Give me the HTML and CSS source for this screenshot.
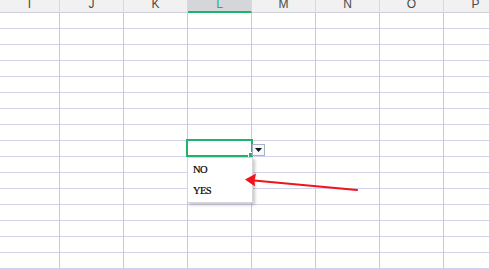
FILE: index.html
```html
<!DOCTYPE html>
<html>
<head lang="en">
<meta charset="UTF-8">
<title>数据有效性</title>
<link rel="stylesheet" href="styles.css">
</head>
<body>
<div class="sheet">
    <div class="row head">
        <div class="col">I</div>
        <div class="col">J</div>
        <div class="col">K</div>
        <div class="col on">L</div>
        <div class="col">M</div>
        <div class="col">N</div>
        <div class="col">O</div>
        <div class="col">P</div>
    </div>
    <div class="row"><div></div><div></div><div></div><div></div><div></div><div></div><div></div><div></div></div>
    <div class="row"><div></div><div></div><div></div><div></div><div></div><div></div><div></div><div></div></div>
    <div class="row"><div></div><div></div><div></div><div></div><div></div><div></div><div></div><div></div></div>
    <div class="row"><div></div><div></div><div></div><div></div><div></div><div></div><div></div><div></div></div>
    <div class="row"><div></div><div></div><div></div><div></div><div></div><div></div><div></div><div></div></div>
    <div class="row"><div></div><div></div><div></div><div></div><div></div><div></div><div></div><div></div></div>
    <div class="row"><div></div><div></div><div></div><div></div><div></div><div></div><div></div><div></div></div>
    <div class="row"><div></div><div></div><div></div><div></div><div></div><div></div><div></div><div></div></div>
    <div class="row"><div></div><div></div><div></div><div></div><div></div><div></div><div></div><div></div></div>
    <div class="row"><div></div><div></div><div></div><div></div><div></div><div></div><div></div><div></div></div>
    <div class="row"><div></div><div></div><div></div><div></div><div></div><div></div><div></div><div></div></div>
    <div class="row"><div></div><div></div><div></div><div></div><div></div><div></div><div></div><div></div></div>
    <div class="row"><div></div><div></div><div></div><div></div><div></div><div></div><div></div><div></div></div>
    <div class="row"><div></div><div></div><div></div><div></div><div></div><div></div><div></div><div></div></div>
    <div class="row"><div></div><div></div><div></div><div></div><div></div><div></div><div></div><div></div></div>
    <div class="row"><div></div><div></div><div></div><div></div><div></div><div></div><div></div><div></div></div>

    <!-- 选中单元格 + 下拉 -->
    <div class="cur"><span class="handle"></span></div>
    <div class="drop-btn">
        <svg width="7" height="4" viewBox="0 0 7 4"><polygon points="0,0 7,0 3.5,4" fill="#111"/></svg>
    </div>
    <ul class="list">
        <li>NO</li>
        <li>YES</li>
    </ul>

    <svg class="arrow" width="489" height="269" viewBox="0 0 489 269">
        <line x1="357" y1="190" x2="254" y2="180.5" stroke="#f0141c" stroke-width="2.2" stroke-linecap="round"/>
        <polygon points="245,179.5 256,173.5 254.5,180.5 255,186.5" fill="#f0141c"/>
    </svg>
</div>
</body>
</html>
```

FILE: styles.css
```css
*{margin:0;padding:0;}
body{
	width:489px;
	height:269px;
	overflow:hidden;
	background:#fff;
	font-family:"Liberation Sans",Arial,sans-serif;
}
.sheet{position:relative;width:489px;height:269px;overflow:hidden;}

.row{
	display:grid;
	grid-template-columns:60px repeat(7,64px);
	height:16px;
}
.row div{
	border-right:1px solid #c6c6e8;
	border-bottom:1px solid #d2d2ef;
	background:#fffffd;
}

.head{height:13px;}
.head .col{
	background:#f1f1f1;
	border-right:1px solid #d9d9d9;
	border-bottom:1px solid #cfcfdc;
	color:#4a4a4a;
	font-size:12px;
	line-height:8px;
	text-align:center;
}
.head .col.on{
	background:#d4d6da;
	color:#1fb26c;
	border-bottom:2px solid #1fb26c;
}

.cur{
	position:absolute;
	left:186px;
	top:139px;
	width:67px;
	height:18px;
	box-sizing:border-box;
	border:2px solid #21b36d;
}
.handle{
	position:absolute;
	right:-3px;
	bottom:-3px;
	width:4px;
	height:4px;
	background:#21b36d;
	border:1px solid #fff;
}

.drop-btn{
	position:absolute;
	left:252px;
	top:144px;
	width:13px;
	height:12px;
	box-sizing:border-box;
	border:1px solid #a8b3c6;
	background:#f7f8fa;
	display:flex;
	align-items:center;
	justify-content:center;
}

.list{
	position:absolute;
	left:187px;
	top:157px;
	width:66px;
	height:46px;
	box-sizing:border-box;
	list-style:none;
	background:#fff;
	border:1px solid #d6d6d6;
	box-shadow:2px 2px 3px rgba(0,0,0,0.22);
	padding-top:6px;
}
.list li{
	height:21px;
	line-height:12px;
	padding-left:5px;
	font-family:"Liberation Serif","Times New Roman",serif;
	font-size:10.5px;
	letter-spacing:-0.6px;
	color:#000;
	-webkit-text-stroke:0.2px #000;
}

.arrow{position:absolute;left:0;top:0;}
```
